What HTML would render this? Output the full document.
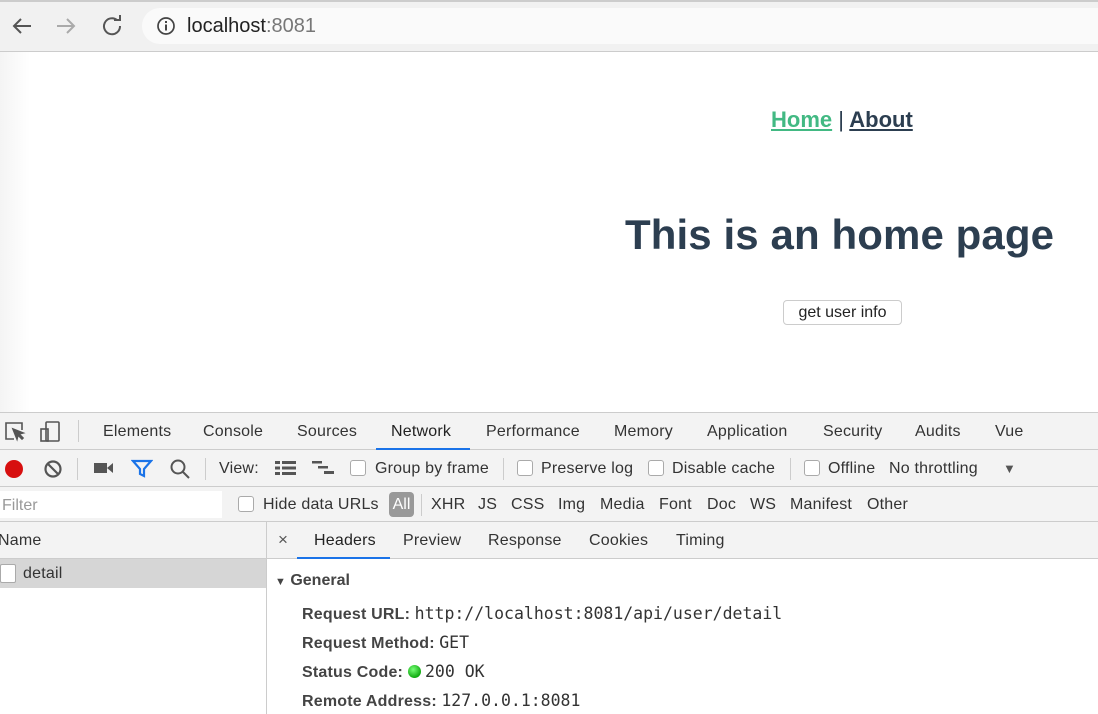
<!DOCTYPE html>
<html><head><style>
*{box-sizing:border-box;margin:0;padding:0}
body{width:1098px;height:714px;overflow:hidden;font-family:"Liberation Sans",sans-serif;background:#fff;position:relative;color:#333}
.a{position:absolute;white-space:nowrap}
.t{font-size:16px;color:#333;letter-spacing:0.2px}
.cb{position:absolute;width:16px;height:16px;border:1px solid #aaa;border-radius:3px;background:#fff}
.sep{position:absolute;width:1px;background:#ccc}
.mono{font-family:"DejaVu Sans Mono","Liberation Mono",monospace;font-size:16.5px}
b{letter-spacing:0.2px}
</style></head><body>
<div class="a" style="left:0;top:0;width:1098px;height:52px;background:#f1f1f1;border-top:2px solid #ccc;border-bottom:1px solid #ccc"></div>
<div class="a" style="left:142px;top:8px;width:956px;height:36px;background:#fafafa;border-radius:18px 0 0 18px"></div>
<svg class="a" style="left:10px;top:14px" width="120" height="24" viewBox="0 0 120 24" fill="none" stroke-width="2">
<path d="M21 12H4M11 5l-7 7 7 7" stroke="#555"/>
<path d="M47 12h17M57 5l7 7-7 7" stroke="#aaa"/>
<path d="M107 6a8 8 0 1 0 3 6" stroke="#555"/><path d="M104 5h6v-5" stroke="#555" transform="translate(0,1)"/>
</svg>
<svg class="a" style="left:156px;top:16px" width="20" height="20" viewBox="0 0 20 20"><circle cx="10" cy="10" r="8" fill="none" stroke="#444" stroke-width="1.7"/><rect x="9" y="8.5" width="2" height="6" fill="#444"/><rect x="9" y="5" width="2" height="2" fill="#444"/></svg>
<div class="a" style="left:187px;top:15px;font-size:20px;color:#222">localhost<span style="color:#777">:8081</span></div>
<div class="a" style="left:0;top:52px;width:30px;height:360px;background:linear-gradient(90deg,#f4f4f4,#fff)"></div>
<div class="a" style="left:771px;top:107px;font-size:22px;font-weight:bold;color:#2c3e50"><span style="color:#42b983;text-decoration:underline">Home</span> <span style="font-weight:normal">|</span> <span style="text-decoration:underline">About</span></div>
<div class="a" style="left:625px;top:211px;font-size:42px;font-weight:bold;color:#2c3e50;letter-spacing:0.1px">This is an home page</div>
<div class="a" style="left:783px;top:300px;width:119px;height:25px;border:1px solid #ccc;border-radius:4px;background:#fff;font-size:16px;color:#222;text-align:center;line-height:23px">get user info</div>
<div class="a" style="left:0;top:412px;width:1098px;height:38px;background:#f3f3f3;border-top:1px solid #ccc;border-bottom:1px solid #ccc"></div>
<svg class="a" style="left:4px;top:420px" width="62" height="24" viewBox="0 0 62 24" fill="none" stroke="#555" stroke-width="1.6"><path d="M10 19H2V3h16v7"/><path d="M9 9l10 4-4 1 4 4-1 1-4-4-1 4z" fill="#555"/><rect x="42" y="2" width="13" height="19" rx="1"/><rect x="37" y="9" width="7" height="12"/></svg>
<div class="sep" style="left:78px;top:420px;height:22px"></div>
<div class="a t" style="left:103px;top:423px">Elements</div>
<div class="a t" style="left:203px;top:423px">Console</div>
<div class="a t" style="left:297px;top:423px">Sources</div>
<div class="a t" style="left:391px;top:423px;color:#222">Network</div>
<div class="a" style="left:376px;top:448px;width:94px;height:2px;background:#1a73e8"></div>
<div class="a t" style="left:486px;top:423px">Performance</div>
<div class="a t" style="left:614px;top:423px">Memory</div>
<div class="a t" style="left:707px;top:423px">Application</div>
<div class="a t" style="left:823px;top:423px">Security</div>
<div class="a t" style="left:915px;top:423px">Audits</div>
<div class="a t" style="left:995px;top:423px">Vue</div>
<div class="a" style="left:0;top:450px;width:1098px;height:37px;background:#f3f3f3;border-bottom:1px solid #ccc"></div>
<div class="a" style="left:5px;top:460px;width:18px;height:18px;border-radius:50%;background:#d70f0f"></div>
<svg class="a" style="left:43px;top:459px" width="20" height="20" viewBox="0 0 20 20" fill="none" stroke="#555" stroke-width="2.2"><circle cx="10" cy="10" r="7.5"/><path d="M5 5l10 10"/></svg>
<div class="sep" style="left:77px;top:458px;height:22px"></div>
<svg class="a" style="left:93px;top:460px" width="22" height="16" viewBox="0 0 22 16" fill="#555"><rect x="1" y="3" width="13" height="10"/><path d="M14 8l6-5v10z"/></svg>
<svg class="a" style="left:131px;top:459px" width="22" height="20" viewBox="0 0 22 20" fill="none" stroke="#1a73e8" stroke-width="2.2"><path d="M2 2h18l-7 8v7l-4-2v-5z"/></svg>
<svg class="a" style="left:169px;top:458px" width="22" height="22" viewBox="0 0 22 22" fill="none" stroke="#555" stroke-width="2"><circle cx="9" cy="9" r="6.5"/><path d="M14 14l6 6"/></svg>
<div class="sep" style="left:205px;top:458px;height:22px"></div>
<div class="a t" style="left:219px;top:460px">View:</div>
<svg class="a" style="left:275px;top:460px" width="22" height="16" viewBox="0 0 22 16" fill="#555"><rect x="0" y="1" width="5" height="3"/><rect x="7" y="1" width="14" height="3"/><rect x="0" y="6.5" width="5" height="3"/><rect x="7" y="6.5" width="14" height="3"/><rect x="0" y="12" width="5" height="3"/><rect x="7" y="12" width="14" height="3"/></svg>
<svg class="a" style="left:312px;top:460px" width="24" height="16" viewBox="0 0 24 16" fill="#555"><rect x="0" y="1" width="10" height="2.5"/><rect x="6" y="6" width="10" height="2.5"/><rect x="12" y="11" width="10" height="3"/></svg>
<div class="cb" style="left:350px;top:460px"></div>
<div class="a t" style="left:375px;top:460px">Group by frame</div>
<div class="sep" style="left:503px;top:458px;height:22px"></div>
<div class="cb" style="left:517px;top:460px"></div>
<div class="a t" style="left:541px;top:460px">Preserve log</div>
<div class="cb" style="left:648px;top:460px"></div>
<div class="a t" style="left:672px;top:460px">Disable cache</div>
<div class="sep" style="left:790px;top:458px;height:22px"></div>
<div class="cb" style="left:804px;top:460px"></div>
<div class="a t" style="left:828px;top:460px">Offline</div>
<div class="a t" style="left:889px;top:460px">No throttling</div>
<div class="a" style="left:1003px;top:461px;font-size:13px;color:#555">▼</div>
<div class="a" style="left:0;top:487px;width:1098px;height:35px;background:#f3f3f3;border-bottom:1px solid #ccc"></div>
<div class="a" style="left:0;top:491px;width:222px;height:27px;background:#fff"></div>
<div class="a" style="left:2px;top:497px;font-size:16px;color:#999">Filter</div>
<div class="cb" style="left:238px;top:496px"></div>
<div class="a t" style="left:263px;top:496px">Hide data URLs</div>
<div class="a" style="left:389px;top:492px;width:25px;height:25px;border-radius:4px;background:#999;color:#fff;font-size:16px;text-align:center;line-height:25px">All</div>
<div class="sep" style="left:421px;top:494px;height:22px"></div>
<div class="a t" style="left:431px;top:496px">XHR</div>
<div class="a t" style="left:478px;top:496px">JS</div>
<div class="a t" style="left:511px;top:496px">CSS</div>
<div class="a t" style="left:558px;top:496px">Img</div>
<div class="a t" style="left:600px;top:496px">Media</div>
<div class="a t" style="left:659px;top:496px">Font</div>
<div class="a t" style="left:707px;top:496px">Doc</div>
<div class="a t" style="left:750px;top:496px">WS</div>
<div class="a t" style="left:790px;top:496px">Manifest</div>
<div class="a t" style="left:867px;top:496px">Other</div>
<div class="a" style="left:0;top:522px;width:267px;height:37px;background:#f3f3f3;border-bottom:1px solid #ccc"></div>
<div class="a t" style="left:-2px;top:532px">Name</div>
<div class="a" style="left:0;top:559px;width:267px;height:29px;background:#d6d6d6"></div>
<div class="a" style="left:0;top:564px;width:16px;height:19px;border:1px solid #aaa;background:#fff;border-radius:2px"></div>
<div class="a t" style="left:23px;top:565px">detail</div>
<div class="a" style="left:266px;top:522px;width:1px;height:192px;background:#ccc"></div>
<div class="a" style="left:267px;top:522px;width:831px;height:37px;background:#f3f3f3;border-bottom:1px solid #ccc"></div>
<div class="a" style="left:278px;top:530px;font-size:17px;color:#555">×</div>
<div class="a t" style="left:314px;top:532px;color:#222">Headers</div>
<div class="a" style="left:297px;top:557px;width:93px;height:2px;background:#1a73e8"></div>
<div class="a t" style="left:403px;top:532px">Preview</div>
<div class="a t" style="left:488px;top:532px">Response</div>
<div class="a t" style="left:589px;top:532px">Cookies</div>
<div class="a t" style="left:676px;top:532px">Timing</div>
<div class="a" style="left:275px;top:572px;font-size:16px;font-weight:bold;color:#444"><span style="font-size:11px">▼</span> General</div>
<div class="a" style="left:302px;top:604px;font-size:16px;color:#333"><b style="color:#444">Request URL:</b>&nbsp;<span class="mono">http://localhost:8081/api/user/detail</span></div>
<div class="a" style="left:302px;top:633px;font-size:16px;color:#333"><b style="color:#444">Request Method:</b>&nbsp;<span class="mono">GET</span></div>
<div class="a" style="left:302px;top:662px;font-size:16px;color:#333"><b style="color:#444">Status Code:</b>&nbsp;<span style="display:inline-block;width:13px;height:13px;border-radius:50%;background:radial-gradient(circle at 40% 35%,#7f7,#1a1 70%);vertical-align:-1px"></span> <span class="mono">200 OK</span></div>
<div class="a" style="left:302px;top:691px;font-size:16px;color:#333"><b style="color:#444">Remote Address:</b>&nbsp;<span class="mono">127.0.0.1:8081</span></div>
</body></html>
